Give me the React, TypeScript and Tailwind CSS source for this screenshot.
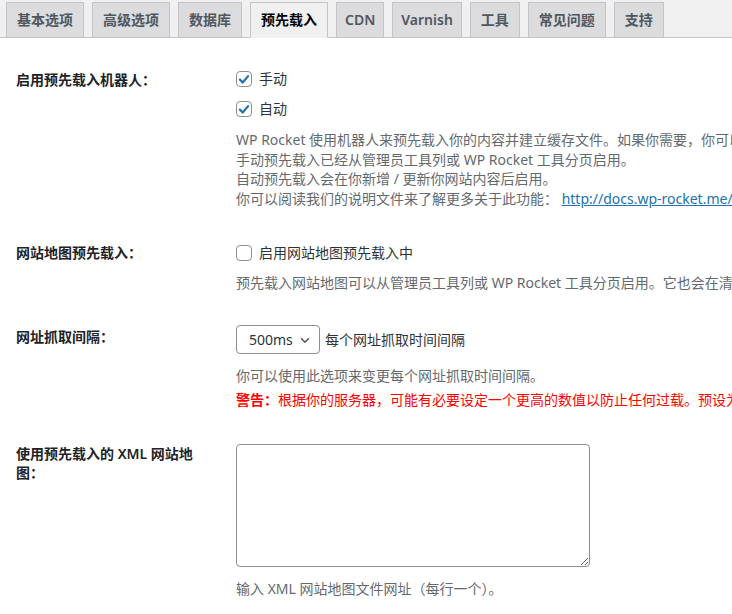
import React from "react";

const tabs = ["基本选项", "高级选项", "数据库", "预先载入", "CDN", "Varnish", "工具", "常见问题", "支持"];

const Check: React.FC<{ checked?: boolean }> = ({ checked }) => (
    <span className="w-4 h-4 rounded-[4px] border border-[#8c8f94] bg-white flex items-center justify-center shrink-0">
        {checked && (
            <svg width="15" height="15" viewBox="0 0 20 20">
                <path d="M4.2 10.2 L8.2 14.2 L15.8 5.2" fill="none" stroke="#2271b1" strokeWidth="3.2" strokeLinecap="round" strokeLinejoin="round" />
            </svg>
        )}
    </span>
);

const Label: React.FC<{ children: React.ReactNode }> = ({ children }) => (
    <div className="w-[220px] shrink-0 pr-10 font-semibold text-[#1d2327] leading-[19px]">{children}</div>
);

const Desc: React.FC<{ children: React.ReactNode; className?: string }> = ({ children, className }) => (
    <p className={"text-[#646970] leading-[19.5px] whitespace-nowrap " + (className ?? "")}>{children}</p>
);

export default function App() {
    return (
        <div className="w-[732px] h-[614px] overflow-hidden bg-white text-sm font-['Noto_Sans','Noto_Sans_CJK_SC',sans-serif]">
            <div className="flex bg-[#f0f0f1] border-b border-[#c3c4c7] pt-[2px] pl-[6px]">
                {tabs.map((t, i) => (
                    <div
                        key={t}
                        className={
                            "border py-[5px] leading-[24px] font-semibold -mb-px whitespace-nowrap " +
                            (/[A-Za-z]/.test(t) ? "px-[8px] " : "px-[10px] ") +
                            (i > 0 ? "ml-2 " : "") +
                            (t === "预先载入"
                                ? "bg-[#f0f0f1] border-[#c3c4c7] border-b-[#f0f0f1] text-black"
                                : "bg-[#dcdcde] border-[#c3c4c7] text-[#50575e]")
                        }
                    >
                        {t}
                    </div>
                ))}
            </div>

            <div className="pl-4">
                {/* 预先载入机器人 */}
                <div className="flex pt-[31px]">
                    <div className="pt-[0.5px]"><Label>启用预先载入机器人：</Label></div>
                    <div className="flex-1 min-w-0">
                        <label className="flex items-center gap-[7px] h-5 text-[#2c3338]">
                            <Check checked />
                            <span>手动</span>
                        </label>
                        <label className="flex items-center gap-[7px] h-5 mt-[10px] text-[#2c3338]">
                            <Check checked />
                            <span>自动</span>
                        </label>
                        <div className="mt-[11px]">
                            <Desc>WP Rocket 使用机器人来预先载入你的内容并建立缓存文件。如果你需要，你可以停用这些机器人。</Desc>
                            <Desc>手动预先载入已经从管理员工具列或 WP Rocket 工具分页启用。</Desc>
                            <Desc>自动预先载入会在你新增 / 更新你网站内容后启用。</Desc>
                            <Desc>
                                你可以阅读我们的说明文件来了解更多关于此功能：{" "}
                                <a className="text-[#2271b1] underline">http://docs.wp-rocket.me/article/8-how-the-cache-is-preloaded</a>
                            </Desc>
                        </div>
                    </div>
                </div>

                {/* 网站地图预先载入 */}
                <div className="flex pt-[35px]">
                    <Label>网站地图预先载入：</Label>
                    <div className="flex-1 min-w-0">
                        <label className="flex items-center gap-[7px] h-5 text-[#2c3338]">
                            <Check />
                            <span>启用网站地图预先载入中</span>
                        </label>
                        <Desc className="mt-[9.5px]">预先载入网站地图可以从管理员工具列或 WP Rocket 工具分页启用。它也会在清除缓存后自动启用。</Desc>
                    </div>
                </div>

                {/* 网址抓取间隔 */}
                <div className="flex pt-[33px]">
                    <div className="pt-[2px]"><Label>网址抓取间隔：</Label></div>
                    <div className="flex-1 min-w-0">
                        <div className="flex items-center gap-[5px]">
                            <div className="w-[84px] h-[29px] rounded-[4px] border border-[#8c8f94] flex items-center justify-between pl-3 pr-[7px] text-[#2c3338]">
                                <span>500ms</span>
                                <svg width="14" height="14" viewBox="0 0 16 16">
                                    <path d="M3.5 6 L8 10.5 L12.5 6" fill="none" stroke="#50575e" strokeWidth="1.8" />
                                </svg>
                            </div>
                            <span className="text-[#2c3338]">每个网址抓取时间间隔</span>
                        </div>
                        <Desc className="mt-[12px]">你可以使用此选项来变更每个网址抓取时间间隔。</Desc>
                        <p className="mt-[4.5px] leading-[19.5px] whitespace-nowrap text-[#ff0000]">
                            <span className="font-semibold">警告：</span>根据你的服务器，可能有必要设定一个更高的数值以防止任何过载。预设为 500 毫秒。
                        </p>
                    </div>
                </div>

                {/* XML 网站地图 */}
                <div className="flex pt-[34px]">
                    <div className="pt-[0.5px]"><Label>使用预先载入的 XML 网站地图：</Label></div>
                    <div className="flex-1 min-w-0">
                        <textarea className="block w-[354px] h-[123px] rounded-[4px] border border-[#8c8f94] bg-white outline-none" />
                        <Desc className="mt-[12px]">输入 XML 网站地图文件网址（每行一个）。</Desc>
                    </div>
                </div>
            </div>
        </div>
    );
}
